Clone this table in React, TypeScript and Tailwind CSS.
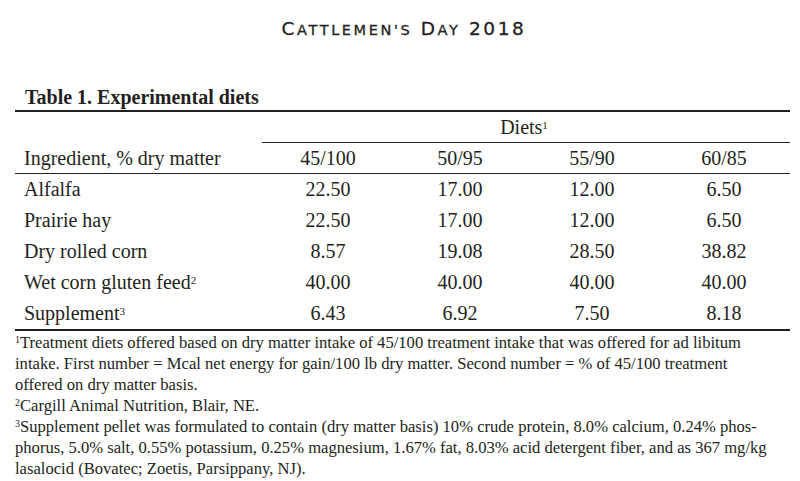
import React from "react";

const rows = [
  { name: "Alfalfa", vals: ["22.50", "17.00", "12.00", "6.50"] },
  { name: "Prairie hay", vals: ["22.50", "17.00", "12.00", "6.50"] },
  { name: "Dry rolled corn", vals: ["8.57", "19.08", "28.50", "38.82"] },
  { name: "Wet corn gluten feed", sup: "2", vals: ["40.00", "40.00", "40.00", "40.00"] },
  { name: "Supplement", sup: "3", vals: ["6.43", "6.92", "7.50", "8.18"] },
];

const diets = ["45/100", "50/95", "55/90", "60/85"];

const App = () => {
  return (
    <div className="w-[800px] h-[481px] bg-white text-[#231f20] overflow-hidden">
      {/* running header, small caps drawn by hand */}
      <div className="pt-[18px] pl-[8px] text-center font-['DejaVu_Sans',sans-serif] text-[18.5px] leading-[21px] tracking-[2.6px] text-[#222] [-webkit-text-stroke:0.3px_#222]">
        C<span className="text-[14.5px]">ATTLEMEN'S</span> D<span className="text-[14.5px]">AY</span> 2018
      </div>

      <div className="mt-[44px] px-[15px] font-['Liberation_Serif',serif]">
        <div className="pl-[10px] text-[20px] leading-[24px] font-bold">
          Table 1. Experimental diets
        </div>

        <div className="mt-[1px] w-[775px] border-t-2 border-b-2 border-[#231f20] text-[20px]">
          <div className="grid grid-cols-[247px_528px]">
            <div />
            <div className="h-[31px] leading-[31px] text-center border-b border-[#231f20] pr-[4px]">
              Diets<sup className="text-[11px]">1</sup>
            </div>
          </div>
          <div className="grid grid-cols-[247px_repeat(4,132px)] h-[31px] leading-[30px] border-b border-[#231f20]">
            <div className="pl-[9px]">Ingredient, % dry matter</div>
            {diets.map((d) => (
              <div key={d} className="text-center">
                {d}
              </div>
            ))}
          </div>
          {rows.map((r) => (
            <div key={r.name} className="grid grid-cols-[247px_repeat(4,132px)] h-[31px] leading-[31px]">
              <div className="pl-[9px]">
                {r.name}
                {r.sup && <sup className="text-[11px]">{r.sup}</sup>}
              </div>
              {r.vals.map((v, i) => (
                <div key={i} className="text-center">
                  {v}
                </div>
              ))}
            </div>
          ))}
        </div>

        <div className="mt-[1px] text-[16.6px] leading-[21px] whitespace-nowrap">
          <div>
            <sup className="text-[10px]">1</sup>Treatment diets offered based on dry matter intake of 45/100 treatment intake that was offered for ad libitum
          </div>
          <div>intake. First number = Mcal net energy for gain/100 lb dry matter. Second number = % of 45/100 treatment</div>
          <div>offered on dry matter basis.</div>
          <div>
            <sup className="text-[10px]">2</sup>Cargill Animal Nutrition, Blair, NE.
          </div>
          <div>
            <sup className="text-[10px]">3</sup>Supplement pellet was formulated to contain (dry matter basis) 10% crude protein, 8.0% calcium, 0.24% phos-
          </div>
          <div>phorus, 5.0% salt, 0.55% potassium, 0.25% magnesium, 1.67% fat, 8.03% acid detergent fiber, and as 367 mg/kg</div>
          <div>lasalocid (Bovatec; Zoetis, Parsippany, NJ).</div>
        </div>
      </div>
    </div>
  );
};

export default App;
